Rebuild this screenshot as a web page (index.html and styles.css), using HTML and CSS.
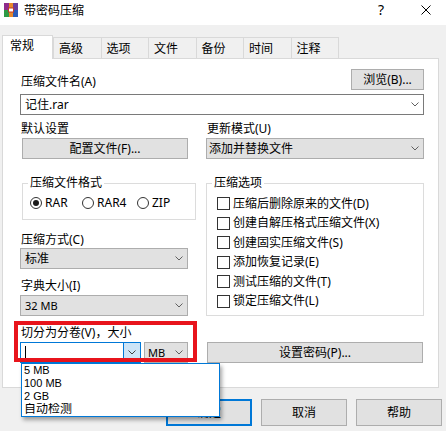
FILE: index.html
```html
<!DOCTYPE html>
<html lang="zh-CN">
<head>
<meta charset="utf-8">
<title>带密码压缩</title>
<link rel="stylesheet" href="styles.css">
</head>
<body>
<div class="titlebar">
  <svg class="app-icon" width="16" height="16" viewBox="0 0 16 16">
    <rect x="1" y="1" width="5" height="7" fill="#8f2c8c"/>
    <rect x="1" y="8" width="5" height="7" fill="#2f9a45"/>
    <rect x="10" y="1" width="5" height="7" fill="#6a3d9a"/>
    <rect x="10" y="8" width="5" height="7" fill="#2a5cb8"/>
    <rect x="6" y="1" width="4" height="14" fill="#e8892a"/>
    <rect x="5.5" y="6" width="5" height="4" fill="#fff" stroke="#c0392b" stroke-width="1"/>
  </svg>
  <span class="title">带密码压缩</span>
  <span class="help">?</span>
  <svg class="close" width="10" height="10" viewBox="0 0 10 10"><path d="M0.5 0.5L9.5 9.5M9.5 0.5L0.5 9.5" stroke="#000" stroke-width="1"/></svg>
</div>

<div class="tabs">
  <div class="tab active">常规</div>
  <div class="tab">高级</div>
  <div class="tab">选项</div>
  <div class="tab">文件</div>
  <div class="tab">备份</div>
  <div class="tab">时间</div>
  <div class="tab">注释</div>
</div>

<div class="panel">
  <div class="row-top">
    <span class="label">压缩文件名(A)</span>
    <button class="btn browse">浏览(B)...</button>
  </div>
  <div class="combo edit wide">
    <span class="value">记住.rar</span>
    <span class="arrow"><svg width="8" height="5" viewBox="0 0 8 5"><polyline points="0.5,0.5 4,4 7.5,0.5" fill="none" stroke="#606060"/></svg></span>
  </div>

  <div class="cols">
    <div class="col left">
      <div class="label">默认设置</div>
      <button class="btn profile">配置文件(F)...</button>
      <fieldset class="group fmt">
        <legend>压缩文件格式</legend>
        <div class="radios">
          <span class="radio on"><i></i>RAR</span>
          <span class="radio"><i></i>RAR4</span>
          <span class="radio"><i></i>ZIP</span>
        </div>
      </fieldset>
      <div class="label gap-method">压缩方式(C)</div>
      <div class="combo">
        <span class="value">标准</span>
        <span class="arrow"><svg width="8" height="5" viewBox="0 0 8 5"><polyline points="0.5,0.5 4,4 7.5,0.5" fill="none" stroke="#606060"/></svg></span>
      </div>
      <div class="label gap-dict">字典大小(I)</div>
      <div class="combo after-label">
        <span class="value lat">32 MB</span>
        <span class="arrow"><svg width="8" height="5" viewBox="0 0 8 5"><polyline points="0.5,0.5 4,4 7.5,0.5" fill="none" stroke="#606060"/></svg></span>
      </div>
      <div class="label gap-dict">切分为分卷(V)，大小</div>
      <div class="split">
        <div class="combo edit focus">
          <span class="caret"></span>
          <span class="arrow-btn"><svg width="8" height="5" viewBox="0 0 8 5"><polyline points="0.5,0.5 4,4 7.5,0.5" fill="none" stroke="#404040"/></svg></span>
        </div>
        <div class="combo unit">
          <span class="value lat">MB</span>
          <span class="arrow"><svg width="8" height="5" viewBox="0 0 8 5"><polyline points="0.5,0.5 4,4 7.5,0.5" fill="none" stroke="#606060"/></svg></span>
        </div>
      </div>
    </div>

    <div class="col right">
      <div class="label">更新模式(U)</div>
      <div class="combo update">
        <span class="value">添加并替换文件</span>
        <span class="arrow"><svg width="8" height="5" viewBox="0 0 8 5"><polyline points="0.5,0.5 4,4 7.5,0.5" fill="none" stroke="#606060"/></svg></span>
      </div>
      <fieldset class="group opts">
        <legend>压缩选项</legend>
        <div class="checks">
          <span class="check"><i></i>压缩后删除原来的文件(D)</span>
          <span class="check"><i></i>创建自解压格式压缩文件(X)</span>
          <span class="check"><i></i>创建固实压缩文件(S)</span>
          <span class="check"><i></i>添加恢复记录(E)</span>
          <span class="check"><i></i>测试压缩的文件(T)</span>
          <span class="check"><i></i>锁定压缩文件(L)</span>
        </div>
      </fieldset>
      <button class="btn pwd">设置密码(P)...</button>
    </div>
  </div>

  <div class="annot"></div>
  <ul class="droplist">
    <li class="small">5 MB</li>
    <li class="small">100 MB</li>
    <li class="small">2 GB</li>
    <li>自动检测</li>
  </ul>
</div>

<div class="actions">
  <button class="btn act default">确定</button>
  <button class="btn act">取消</button>
  <button class="btn act">帮助</button>
</div>
</body>
</html>
```

FILE: styles.css
```css
* { box-sizing: border-box; }
html, body { margin: 0; padding: 0; }
body {
  width: 446px;
  height: 431px;
  overflow: hidden;
  background: #f0f0f0;
  font-family: "Noto Sans", "Noto Sans CJK SC", sans-serif;
  font-size: 12px;
  line-height: 16px;
  color: #000;
}

/* title bar */
.titlebar {
  height: 25px;
  background: #fff;
  display: flex;
  align-items: flex-start;
}
.app-icon { margin: 2px 0 0 3px; }
.title { margin: 3px 0 0 5px; }
.help { margin: 2px 0 0 auto; font-size: 14px; line-height: 16px; }
.close { margin: 5px 15px 0 37px; }

/* tabs */
.tabs {
  display: flex;
  align-items: flex-end;
  height: 33px;
  padding-left: 2px;
}
.tab {
  width: 48.5px;
  height: 21px;
  margin-left: -1px;
  padding: 3px 0 0 5px;
  border: 1px solid #d9d9d9;
  border-bottom: none;
  background: #f0f0f0;
  white-space: nowrap;
}
.tab.active {
  position: relative;
  z-index: 2;
  width: 51px;
  height: 24px;
  margin-left: 0;
  margin-bottom: -1px;
  padding: 2px 0 0 7px;
  background: #fff;
}
.tab.active + .tab { margin-left: 0; }

/* panel */
.panel {
  position: relative;
  margin-left: 2px;
  width: 437px;
  height: 330px;
  background: #fff;
  border: 1px solid #d9d9d9;
  padding: 10px 14px 0 17px;
}
.label { padding-left: 1px; white-space: nowrap; }

.btn {
  display: block;
  font: inherit;
  color: #000;
  background: #e1e1e1;
  border: 1px solid #adadad;
  padding: 0;
  height: 21px;
  line-height: 19px;
  text-align: center;
  white-space: nowrap;
}

.row-top {
  display: flex;
  justify-content: space-between;
  align-items: flex-end;
  height: 21px;
}
.browse { width: 73px; }

.combo {
  display: flex;
  align-items: center;
  height: 21px;
  background: #e1e1e1;
  border: 1px solid #adadad;
  padding-left: 4px;
  white-space: nowrap;
}
.combo .arrow {
  margin-left: auto;
  width: 17px;
  height: 100%;
  display: flex;
  align-items: center;
  justify-content: center;
}
.combo.edit { background: #fff; border-color: #7a7a7a; }
.combo.wide { margin-top: 4px; width: 404px; }
.lat { font-size: 11px; }

.cols {
  display: grid;
  grid-template-columns: 176px 218px;
  column-gap: 10px;
  align-items: start;
  margin-top: 6px;
}
.col { display: flex; flex-direction: column; align-items: flex-start; }
.col.left .combo { width: 168px; margin-top: 0; }
.col.left .combo.after-label { margin-top: 1px; }
.profile { margin: 1px 0 0 2px; width: 166px; }

.group {
  margin: 0;
  padding: 0;
  min-width: 0;
  border: 1px solid #dcdcdc;
}
.group legend {
  padding: 0 2px;
  margin-left: 5px;
  line-height: 14px;
}
.group.fmt { margin: 17px 0 0 2px; width: 174px; }
.radios {
  display: grid;
  grid-template-columns: 52px 55px auto;
  padding: 6px 0 9px 7px;
}
.radio {
  display: flex;
  align-items: center;
  height: 14px;
  line-height: 14px;
}
.radio i {
  position: relative;
  width: 12px;
  height: 12px;
  border: 1px solid #333;
  border-radius: 50%;
  margin-right: 3px;
  background: #fff;
}
.radio.on i::after {
  content: "";
  position: absolute;
  left: 2px;
  top: 2px;
  width: 6px;
  height: 6px;
  border-radius: 50%;
  background: #1a1a1a;
}

.gap-method { margin-top: 12px; }
.gap-dict { margin-top: 9px; }

.split {
  display: flex;
  gap: 3px;
  margin-top: 1px;
}
.col.left .split .combo { margin-top: 0; }
.col.left .combo.focus {
  width: 121px;
  border-color: #0078d7;
  padding-left: 4px;
}
.caret {
  width: 1px;
  height: 13px;
  background: #000;
}
.arrow-btn {
  margin-left: auto;
  width: 17px;
  height: 100%;
  display: flex;
  align-items: center;
  justify-content: center;
  background: #cce4f7;
  border-left: 1px solid #0078d7;
}
.col.left .combo.unit { width: 44px; padding-left: 3px; }
.combo.unit .arrow { width: 16px; }

/* right column */
.combo.update { margin-top: 1px; width: 218px; padding-left: 2px; }
.group.opts { margin-top: 17px; width: 218px; }
.checks { padding: 4px 0 4px 10px; }
.check {
  display: flex;
  align-items: center;
  height: 19.5px;
  white-space: nowrap;
}
.check i {
  width: 13px;
  height: 13px;
  border: 1px solid #333;
  background: #fff;
  margin-right: 3px;
}
.pwd { margin: 26px 0 0 1px; width: 216px; }

/* overlays */
.annot {
  position: absolute;
  left: 11px;
  top: 262px;
  width: 183px;
  height: 41px;
  border: 4px solid #e8141c;
  z-index: 4;
  pointer-events: none;
}
.droplist {
  position: absolute;
  left: 18px;
  top: 304px;
  width: 199px;
  margin: 0;
  padding: 0;
  list-style: none;
  background: #fff;
  border: 1px solid #0078d7;
  box-shadow: 2px 3px 4px rgba(0, 0, 0, 0.35);
  z-index: 5;
  font-family: "Liberation Sans", "Noto Sans CJK SC", sans-serif;
}
.droplist li {
  height: 13px;
  line-height: 13px;
  padding-left: 2px;
  font-size: 11px;
  white-space: nowrap;
  overflow: hidden;
}
.droplist li:last-child { font-size: 12px; }

/* dialog buttons */
.actions {
  display: flex;
  justify-content: flex-end;
  gap: 9px;
  padding-right: 4px;
  margin-top: 11px;
}
.act { width: 86px; height: 27px; line-height: 25px; }
.act.default { border: 2px solid #0078d7; line-height: 23px; }
```
